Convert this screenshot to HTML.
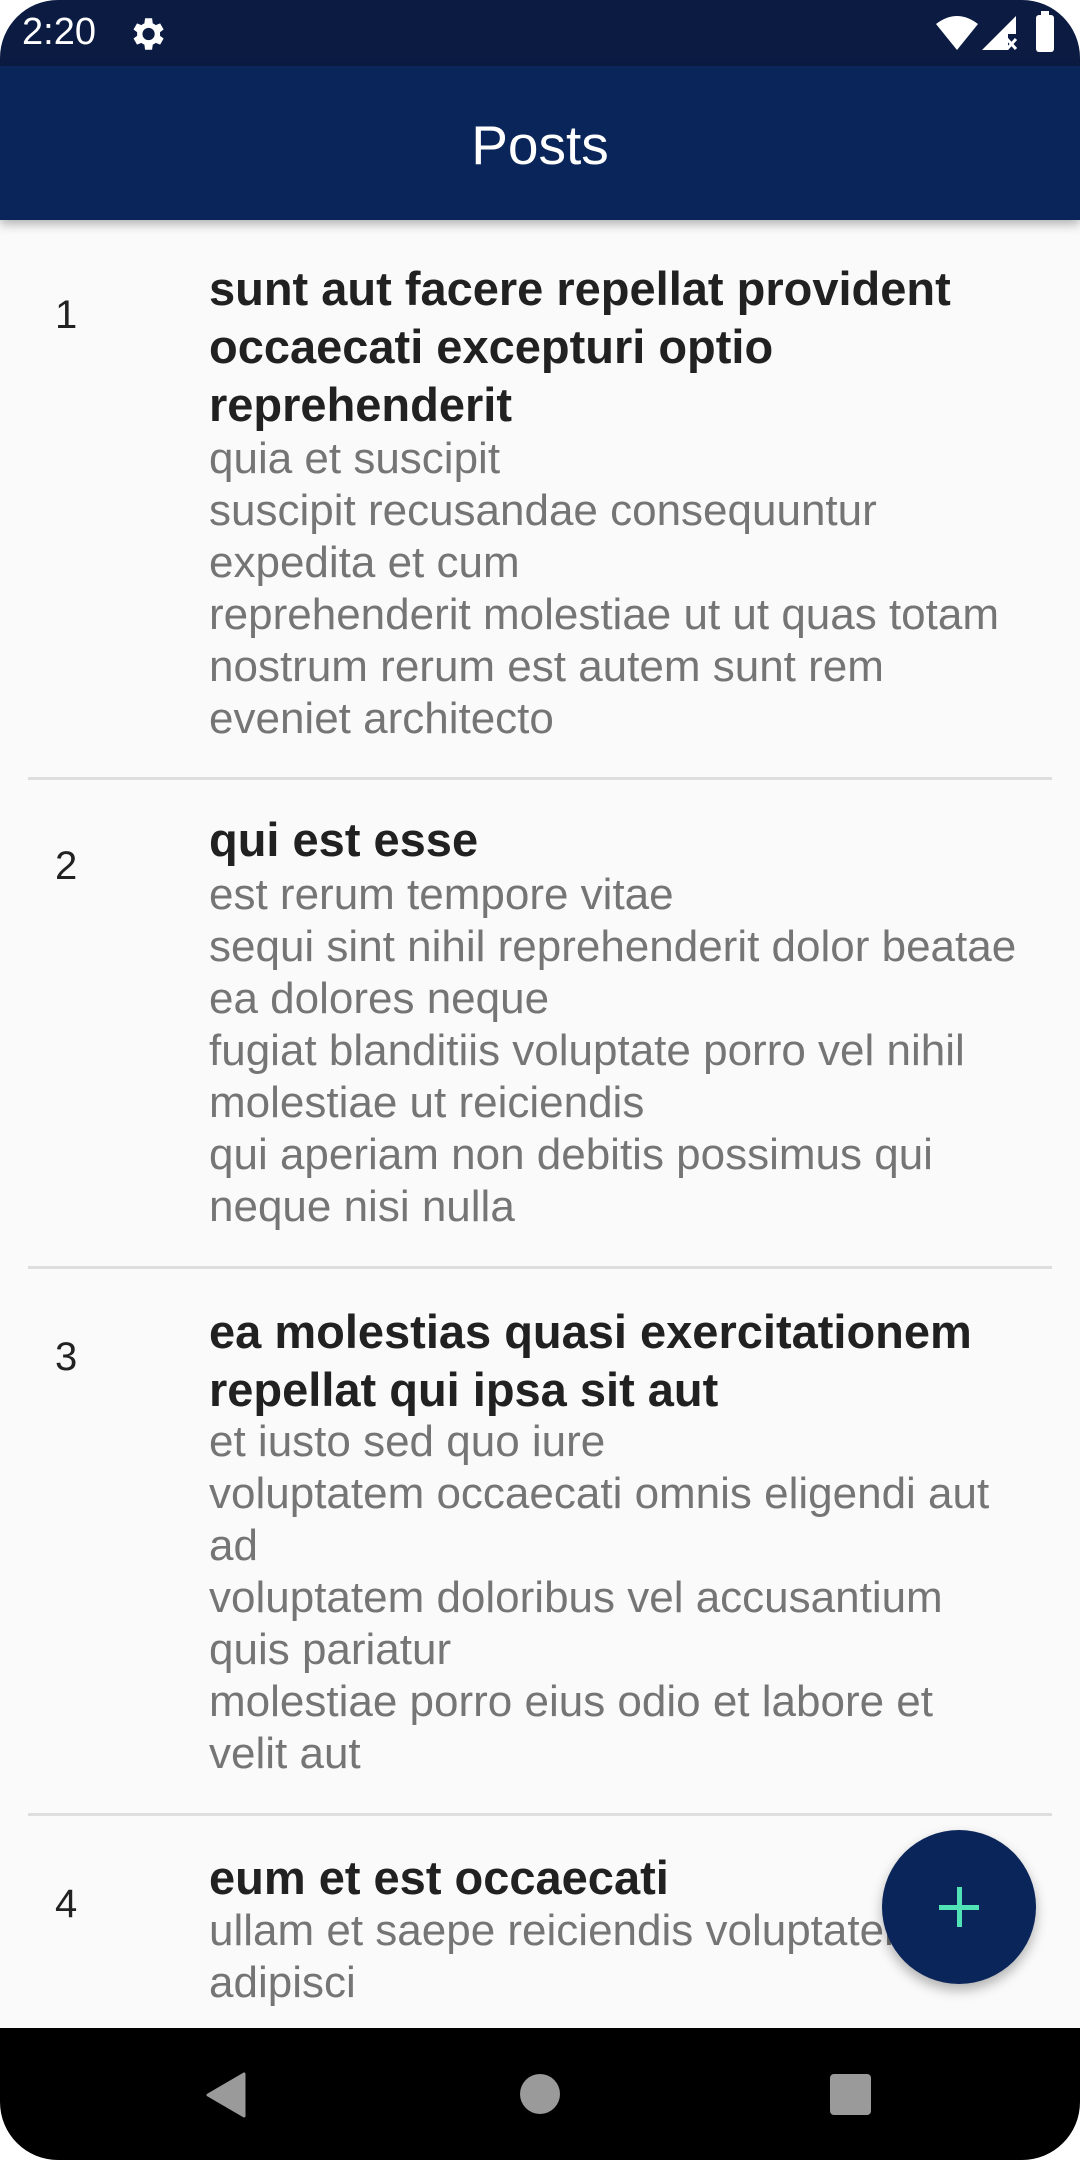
<!DOCTYPE html>
<html><head><meta charset="utf-8"><style>
*{margin:0;padding:0;box-sizing:border-box}
html,body{width:1080px;height:2160px;background:#fff;overflow:hidden;font-family:"Liberation Sans",sans-serif}
#screen{position:absolute;left:0;top:0;width:1080px;height:2160px;border-radius:58px;overflow:hidden;background:#fafafa}
#status{position:absolute;left:0;top:0;width:1080px;height:66px;background:#0b1b42}
#app{position:absolute;left:0;top:66px;width:1080px;height:154px;background:#0a2559;box-shadow:0 4px 10px rgba(0,0,0,.3);z-index:2}
#app .t{position:absolute;left:0;width:1080px;top:48px;text-align:center;color:#fff;font-size:55px;line-height:62px}
.l{position:absolute;left:209px;white-space:nowrap}
.ti{font-size:47px;font-weight:bold;color:#212121;line-height:58px;height:58px}
.su{font-size:44px;color:#757575;line-height:52px;height:52px}
.n{position:absolute;left:55px;font-size:40px;color:#222;line-height:44px}
.d{position:absolute;left:28px;width:1024px;height:3px;background:#dedede}
#nav{position:absolute;left:0;top:2028px;width:1080px;height:132px;background:#000}
#fab{position:absolute;left:882px;top:1830px;width:154px;height:154px;border-radius:50%;background:#0a2559;box-shadow:0 6px 12px rgba(0,0,0,.3);z-index:3}
</style></head><body>
<div id="screen">
<div id="status">
<div style="position:absolute;left:22px;top:10px;color:#fff;font-size:38px;line-height:44px">2:20</div>
<svg style="position:absolute;left:126px;top:13px" width="42" height="42" viewBox="0 0 24 24"><path fill="#fff" d="M19.4 13a7.5 7.5 0 0 0 0-2l2.1-1.6-2-3.5-2.5 1a7 7 0 0 0-1.7-1L14.9 3h-4l-.4 2.9a7 7 0 0 0-1.7 1l-2.5-1-2 3.5L6.4 11a7.5 7.5 0 0 0 0 2l-2.1 1.6 2 3.5 2.5-1a7 7 0 0 0 1.7 1l.4 2.9h4l.4-2.9a7 7 0 0 0 1.7-1l2.5 1 2-3.5zM12.9 15.5a3.5 3.5 0 1 1 0-7 3.5 3.5 0 0 1 0 7z"/></svg>
<svg style="position:absolute;left:936px;top:16px" width="42" height="36" viewBox="0 0 42 36"><path fill="#fff" d="M0 8Q21-8 42 8L21 34z"/></svg>
<svg style="position:absolute;left:982px;top:16px" width="36" height="36" viewBox="0 0 36 36"><path fill="#fff" d="M34 0V18H26V34H0z"/><path stroke="#fff" stroke-width="3" d="M25 23l9 10M34 23l-9 10"/></svg>
<div style="position:absolute;left:1036px;top:15px;width:18px;height:37px;background:#fff;border-radius:3px"></div>
<div style="position:absolute;left:1041px;top:11px;width:8px;height:5px;background:#fff"></div>
</div>
<div id="app"><div class="t">Posts</div></div>

<div class="n" style="top:293px">1</div>
<div class="l" style="top:260px">
<div class="ti">sunt aut facere repellat provident</div><div class="ti">occaecati excepturi optio</div><div class="ti">reprehenderit</div></div>
<div class="l" style="top:433px">
<div class="su">quia et suscipit</div><div class="su">suscipit recusandae consequuntur</div><div class="su">expedita et cum</div><div class="su">reprehenderit molestiae ut ut quas totam</div><div class="su">nostrum rerum est autem sunt rem</div><div class="su">eveniet architecto</div></div>
<div class="d" style="top:777px"></div>

<div class="n" style="top:844px">2</div>
<div class="l" style="top:811px"><div class="ti">qui est esse</div></div>
<div class="l" style="top:869px">
<div class="su">est rerum tempore vitae</div><div class="su">sequi sint nihil reprehenderit dolor beatae</div><div class="su">ea dolores neque</div><div class="su">fugiat blanditiis voluptate porro vel nihil</div><div class="su">molestiae ut reiciendis</div><div class="su">qui aperiam non debitis possimus qui</div><div class="su">neque nisi nulla</div></div>
<div class="d" style="top:1266px"></div>

<div class="n" style="top:1335px">3</div>
<div class="l" style="top:1303px">
<div class="ti">ea molestias quasi exercitationem</div><div class="ti">repellat qui ipsa sit aut</div></div>
<div class="l" style="top:1416px">
<div class="su">et iusto sed quo iure</div><div class="su">voluptatem occaecati omnis eligendi aut</div><div class="su">ad</div><div class="su">voluptatem doloribus vel accusantium</div><div class="su">quis pariatur</div><div class="su">molestiae porro eius odio et labore et</div><div class="su">velit aut</div></div>
<div class="d" style="top:1813px"></div>

<div class="n" style="top:1882px">4</div>
<div class="l" style="top:1849px"><div class="ti">eum et est occaecati</div></div>
<div class="l" style="top:1905px">
<div class="su">ullam et saepe reiciendis voluptatem</div><div class="su">adipisci</div></div>

<div id="fab"><div style="position:absolute;left:57px;top:75px;width:40px;height:5px;background:#4fe3b5"></div><div style="position:absolute;left:75px;top:57px;width:5px;height:40px;background:#4fe3b5"></div></div>

<div id="nav">
<svg style="position:absolute;left:204px;top:44px" width="44" height="46" viewBox="0 0 44 46"><path fill="#9a9a9a" d="M40 2V44L4 23z" stroke="#9a9a9a" stroke-width="3" stroke-linejoin="round"/></svg>
<div style="position:absolute;left:520px;top:46px;width:40px;height:40px;border-radius:50%;background:#9a9a9a"></div>
<div style="position:absolute;left:830px;top:46px;width:41px;height:41px;border-radius:4px;background:#9a9a9a"></div>
</div>
</div>
</body></html>
